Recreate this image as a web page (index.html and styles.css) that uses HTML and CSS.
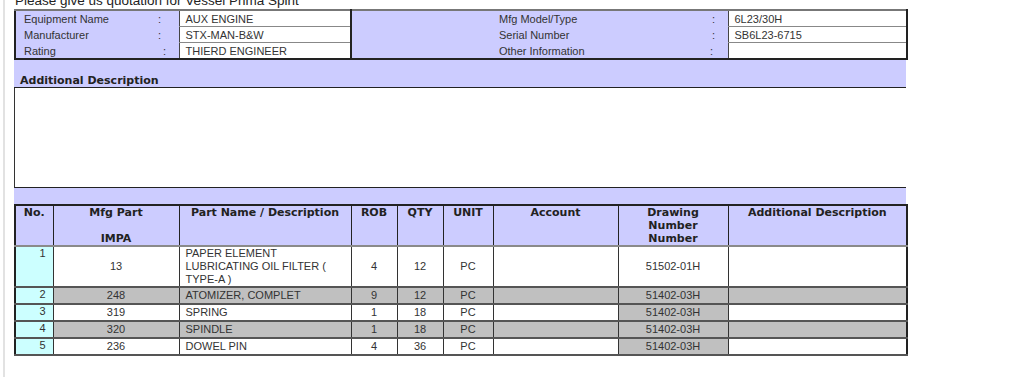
FILE: index.html
```html
<!DOCTYPE html>
<html>
<head>
<meta charset="utf-8">
<title>Quotation</title>
<link rel="stylesheet" href="styles.css">
</head>
<body>
<div class="page">
  <div class="title">Please give us quotation for Vessel Prima Spirit</div>

  <table class="info">
    <colgroup>
      <col class="c-lbl"><col class="c-colon"><col class="c-val"><col class="c-lbl2"><col class="c-colon2"><col class="c-val2">
    </colgroup>
    <tr>
      <td class="lbl">Equipment Name</td><td class="colon">:</td><td class="val">AUX ENGINE</td>
      <td class="lbl2">Mfg Model/Type</td><td class="colon2">:</td><td class="val">6L23/30H</td>
    </tr>
    <tr>
      <td class="lbl">Manufacturer</td><td class="colon">:</td><td class="val">STX-MAN-B&amp;W</td>
      <td class="lbl2">Serial Number</td><td class="colon2">:</td><td class="val">SB6L23-6715</td>
    </tr>
    <tr>
      <td class="lbl">Rating</td><td class="colon colon-shift">:</td><td class="val">THIERD ENGINEER</td>
      <td class="lbl2">Other Information</td><td class="colon2 colon2-shift">:</td><td class="val"></td>
    </tr>
  </table>

  <div class="desc-head">Additional Description</div>
  <div class="desc-box"></div>
  <div class="band"></div>

  <table class="items">
    <colgroup>
      <col class="w-no"><col class="w-mfg"><col class="w-name"><col class="w-rob"><col class="w-qty"><col class="w-unit"><col class="w-acc"><col class="w-draw"><col class="w-add">
    </colgroup>
    <thead>
      <tr>
        <th>No.</th>
        <th>Mfg Part<br><br>IMPA</th>
        <th>Part Name / Description</th>
        <th>ROB</th>
        <th>QTY</th>
        <th>UNIT</th>
        <th>Account</th>
        <th>Drawing<br>Number<br>Number</th>
        <th>Additional Description</th>
      </tr>
    </thead>
    <tbody>
      <tr class="multi">
        <td class="no">1</td><td>13</td><td class="name">PAPER ELEMENT<br>LUBRICATING OIL FILTER (<br>TYPE-A )</td><td>4</td><td>12</td><td>PC</td><td></td><td>51502-01H</td><td></td>
      </tr>
      <tr class="grey">
        <td class="no">2</td><td>248</td><td class="name">ATOMIZER, COMPLET</td><td>9</td><td>12</td><td>PC</td><td></td><td class="draw">51402-03H</td><td></td>
      </tr>
      <tr>
        <td class="no">3</td><td>319</td><td class="name">SPRING</td><td>1</td><td>18</td><td>PC</td><td></td><td class="draw">51402-03H</td><td></td>
      </tr>
      <tr class="grey">
        <td class="no">4</td><td>320</td><td class="name">SPINDLE</td><td>1</td><td>18</td><td>PC</td><td></td><td class="draw">51402-03H</td><td></td>
      </tr>
      <tr>
        <td class="no">5</td><td>236</td><td class="name">DOWEL PIN</td><td>4</td><td>36</td><td>PC</td><td></td><td class="draw">51402-03H</td><td></td>
      </tr>
    </tbody>
  </table>
</div>
</body>
</html>
```

FILE: styles.css
```css
html, body {
  margin: 0;
  padding: 0;
  background: #ffffff;
}

body {
  font-family: "Liberation Sans", Arial, sans-serif;
  font-size: 11px;
  color: #333333;
  overflow: hidden;
}

.page {
  margin-left: 3px;
  border-left: 2px solid #e2e2e2;
  padding-left: 9px;
  min-height: 384px;
}

.title {
  font-size: 13.5px;
  line-height: 16px;
  margin-top: -7px;
  margin-bottom: 0;
  padding-left: 1px;
  color: #222222;
}

/* ---------- equipment info table ---------- */
.info {
  width: 892px;
  table-layout: fixed;
  border-collapse: collapse;
  background: #ccccff;
  border: 2px solid #222222;
  border-top-color: #777777;
}

.c-lbl { width: 136px; }
.c-colon { width: 28px; }
.c-val { width: 172px; }
.c-lbl2 { width: 350px; }
.c-colon2 { width: 27px; }
.c-val2 { width: 179px; }

.info td {
  line-height: 13px;
  padding: 2px 0 0;
  white-space: nowrap;
}

.info .lbl { padding-left: 8px; }
.info .colon { padding-left: 7px; }
.info .colon-shift { padding-left: 12px; }
.info .lbl2 { padding-left: 147px; }
.info .colon2 { padding-left: 11px; }
.info .colon2-shift { padding-left: 9px; }

.info .val {
  background: #ffffff;
  padding-left: 6px;
  border-top: 1px solid #888888;
  border-bottom: 1px solid #888888;
  border-left: 1px solid #444444;
  border-right: 2px solid #222222;
}

/* ---------- additional description block ---------- */
.desc-head {
  width: 892px;
  box-sizing: border-box;
  background: #ccccff;
  padding: 14px 6px 0;
  line-height: 13px;
  height: 28px;
  font-family: "DejaVu Sans", Verdana, sans-serif;
  font-weight: bold;
  color: #222222;
  border-bottom: 1px solid #222222;
}

.desc-box {
  width: 892px;
  box-sizing: border-box;
  height: 100px;
  border-left: 1px solid #333333;
  border-bottom: 1px solid #222222;
  background: #ffffff;
}

.band {
  width: 892px;
  height: 16px;
  background: #ccccff;
}

/* ---------- items table ---------- */
.items {
  width: 892px;
  table-layout: fixed;
  border-collapse: collapse;
  border: 2px solid #222222;
}

.w-no { width: 38px; }
.w-mfg { width: 126px; }
.w-name { width: 172px; }
.w-rob { width: 46px; }
.w-qty { width: 46px; }
.w-unit { width: 50px; }
.w-acc { width: 125px; }
.w-draw { width: 110px; }
.w-add { width: 179px; }

.items th {
  background: #ccccff;
  color: #222222;
  font-family: "DejaVu Sans", Verdana, sans-serif;
  font-weight: bold;
  line-height: 13px;
  padding: 0 2px;
  vertical-align: top;
  text-align: center;
  border-left: 1px solid #222222;
  border-right: 1px solid #222222;
  border-bottom: 2px solid #8a8a8a;
}

.items td {
  line-height: 13px;
  padding: 1px 0;
  text-align: center;
  vertical-align: middle;
  background: #ffffff;
  border-left: 1px solid #333333;
  border-right: 1px solid #333333;
  border-bottom: 2px solid #555555;
  white-space: nowrap;
}

.items tr.multi td {
  padding-top: 0;
  padding-bottom: 0;
}

.items tr td.name {
  text-align: left;
  padding-left: 6px;
  white-space: normal;
}

.items tr td.no {
  background: #ccffff;
  text-align: right;
  padding-right: 7px;
  vertical-align: top;
  padding-top: 0;
}

.items tr.grey td {
  background: #c0c0c0;
}

.items tr.grey td.no {
  background: #ccffff;
}

.items td.draw {
  background: #c0c0c0;
}
```
